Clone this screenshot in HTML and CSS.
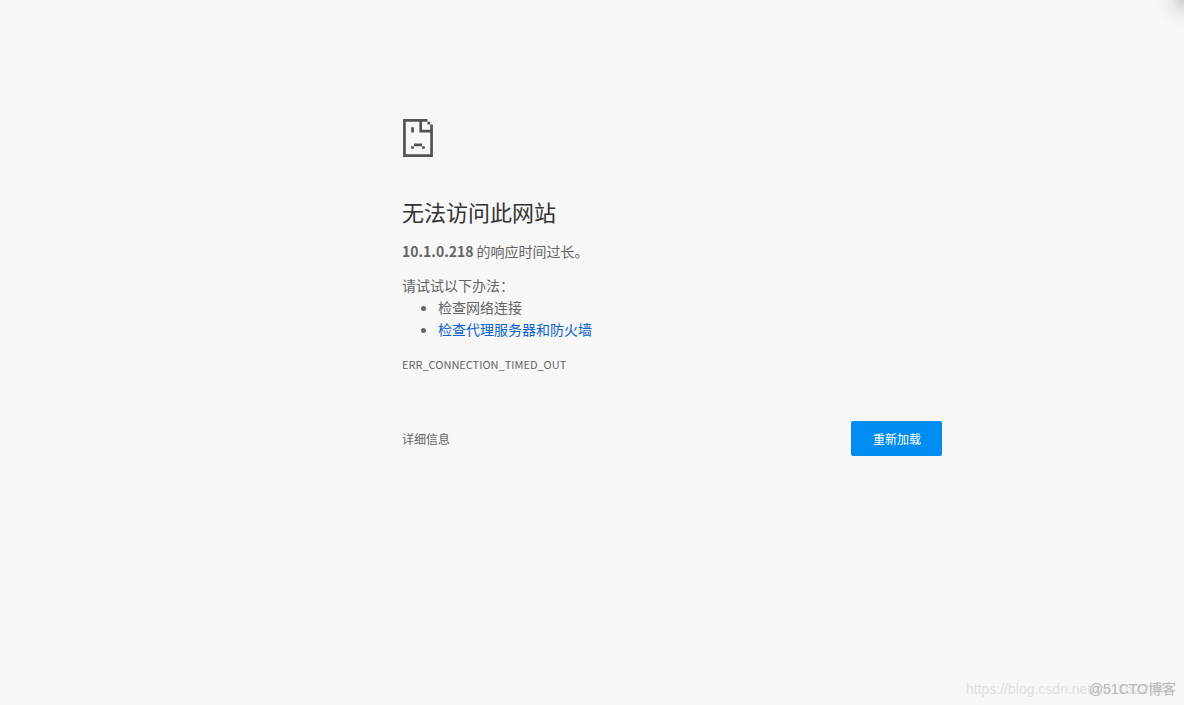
FILE: index.html
```html
<!DOCTYPE html>
<html lang="zh-CN">
<head>
<meta charset="utf-8">
<meta name="viewport" content="width=device-width, initial-scale=1">
<title>10.1.0.218</title>
<link rel="stylesheet" href="styles.css">
</head>
<body>
<div class="corner-shade"></div>
<main class="error-page">
  <svg class="sad-icon" viewBox="0 0 11 14" aria-hidden="true">
    <path fill="currentColor" d="M0 0H9V1H7V4H11V5H6V1H1V13H10V5H11V14H0ZM9 1H10V2H9ZM10 2H11V5H10ZM3 3H4V5H3ZM4 9H7V10H4ZM3 10H4V11H3ZM7 10H8V11H7Z"/>
  </svg>
  <h1 class="title">无法访问此网站</h1>
  <p class="summary"><strong>10.1.0.218</strong> 的响应时间过长。</p>
  <p class="hint">请试试以下办法：</p>
  <ul class="suggestions">
    <li>检查网络连接</li>
    <li><a class="link" href="#proxy">检查代理服务器和防火墙</a></li>
  </ul>
  <p class="error-code">ERR_CONNECTION_TIMED_OUT</p>
  <div class="actions">
    <button class="details" type="button">详细信息</button>
    <button class="reload" type="button">重新加载</button>
  </div>
</main>
<div class="watermark watermark-url">https://blog.csdn.net/u011622843</div>
<div class="watermark watermark-brand">@51CTO博客</div>
</body>
</html>
```
FILE: styles.css
```css
* {
  box-sizing: border-box;
}

body {
  margin: 0;
  min-height: 100vh;
  overflow-x: hidden;
  background: #f7f7f7;
  color: #646464;
  font-family: "Noto Sans CJK SC", sans-serif;
  font-size: 14px;
  line-height: 22px;
}

.error-page {
  width: 100%;
  max-width: 540px;
  margin-left: calc(50% - 190px);
  padding-top: 119px;
}

.sad-icon {
  display: block;
  width: 32px;
  height: 38px;
  color: #535353;
}

.title {
  margin: 39px 0 14px;
  color: #333;
  font-size: 22px;
  font-weight: 400;
  line-height: 30px;
}

.summary {
  margin: 0 0 12px;
}

.hint {
  margin: 0;
}

.suggestions {
  margin: 0;
  padding-left: 36px;
}

.link {
  color: #0b63ce;
  text-decoration: none;
}

.error-code {
  margin: 13px 0 0;
  font-size: 11px;
}

.actions {
  display: flex;
  align-items: center;
  justify-content: space-between;
  margin-top: 46px;
}

.details,
.reload {
  border: 0;
  font-family: inherit;
  font-size: 12px;
  line-height: 19px;
  cursor: pointer;
}

.details {
  padding: 0;
  background: none;
  color: #646464;
}

.reload {
  padding: 8px 21px 8px 22px;
  border-radius: 2px;
  background: #008cf0;
  color: #fff;
}

.watermark {
  position: absolute;
  right: 8px;
  bottom: 6px;
  font-family: "Liberation Sans", "Noto Sans CJK SC", sans-serif;
  font-size: 14px;
  line-height: 20px;
  white-space: nowrap;
}

.watermark-url {
  right: 12px;
  color: #dedede;
}

.watermark-brand {
  color: #b8b8b8;
}

.corner-shade {
  position: absolute;
  top: 0;
  right: 0;
  width: 28px;
  height: 28px;
  background: radial-gradient(circle at top right, #d0d0d0, #ececec 35%, #f7f7f7 70%);
}
```
